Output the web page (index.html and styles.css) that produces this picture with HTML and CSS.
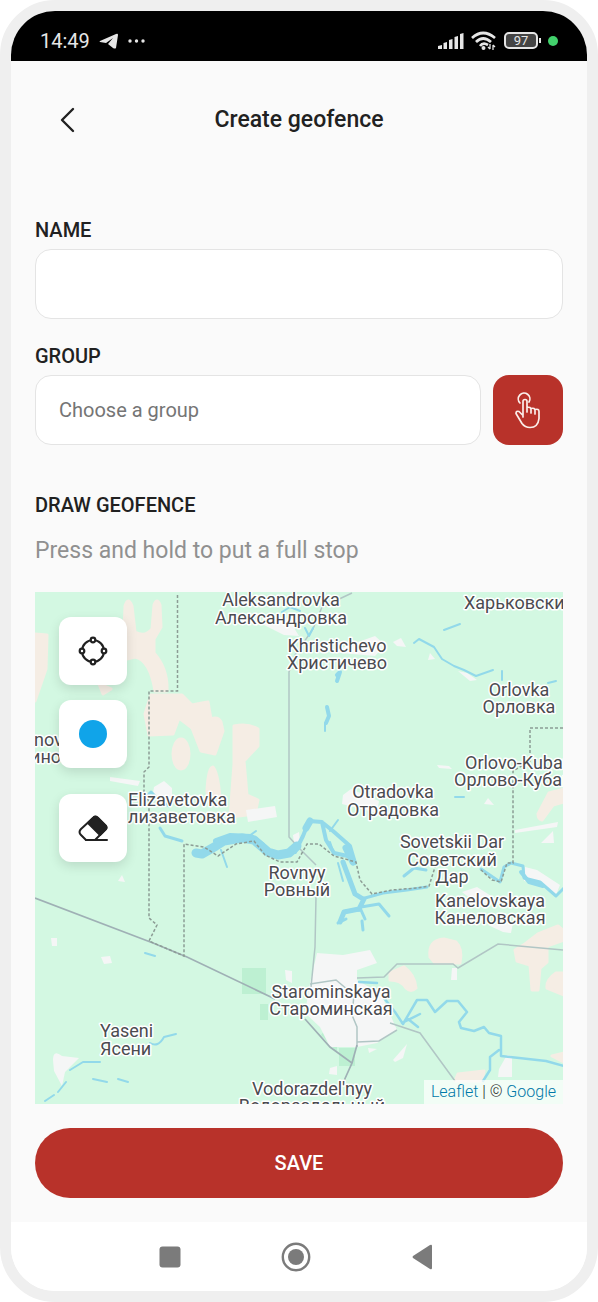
FILE: index.html
```html
<!DOCTYPE html>
<html lang="en">
<head>
    <meta charset="UTF-8">
    <meta name="viewport" content="width=device-width, initial-scale=1.0">
    <title>Create geofence</title>
    <link rel="stylesheet" href="styles.css">
</head>
<body>
    <div class="phone">
        <!-- Status bar -->
        <div class="status-bar">
            <div class="status-group">
                <span class="time">14:49</span>
                <svg width="20" height="18" viewBox="0 0 20 18" fill="#e6e6e6"><path d="M1 9 17 2q2-1 2 1l-2 13q-1 1-3 0l-5-4 5-6-7 5-6-1q-1 0 0-1z"/></svg>
                <svg width="18" height="4" viewBox="0 0 18 4" fill="#e6e6e6"><circle cx="2" cy="2" r="1.7"/><circle cx="8.500" cy="2" r="1.7"/><circle cx="15" cy="2" r="1.7"/></svg>
            </div>
            <div class="status-group status-right">
                <svg width="26" height="18" viewBox="0 0 26 18" fill="#e6e6e6"><path d="M0 17v-3l4-1v4zM5.500 17v-6l3.500-1v7zM11 17V8l3.500-1v10zM16.500 17V5l3.500-1v13zM22 17V2l3.500-1v16z"/></svg>
                <svg width="26" height="20" viewBox="0 0 26 20" fill="none" stroke="#e6e6e6" stroke-width="2.700"><path d="M1 7q11-10 23 0M5 11q7-7 15 0M9 15q3-4 8-1"/><circle cx="12.500" cy="17" r="1" fill="#e6e6e6" stroke-width="2"/><path d="M19 13v5M22 14v5M17 16l2 2M24 16l-2-2" stroke-width="1.300"/></svg>
                <div class="battery">97</div>
                <span class="dot"></span>
            </div>
        </div>

        <main class="app">
            <header class="header">
                <button class="back" type="button" aria-label="Back">
                    <svg width="16" height="26" viewBox="0 0 16 26" fill="none" stroke="#212121" stroke-width="2.400" stroke-linecap="round" stroke-linejoin="round"><path d="M14 2 3 13l11 11"/></svg>
                </button>
                <h1 class="title">Create geofence</h1>
            </header>

            <form class="form">
                <label class="label" for="name">NAME</label>
                <input class="field" id="name" type="text">

                <label class="label label-group" for="group">GROUP</label>
                <div class="group-row">
                    <input class="field" id="group" type="text" placeholder="Choose a group">
                    <button class="pick" type="button" aria-label="Pick a group">
                        <svg width="28" height="38" viewBox="-1 -1 28 38" fill="none" stroke="#fbeeea" stroke-width="1.700" stroke-linecap="round" stroke-linejoin="round"><path d="M5 11a5.800 5.800 0 1 1 9-1"/><path d="M8 25V9.500a2 2 0 0 1 4 0V20M12 15.500q4-1 4 2V21M16 16.500q4-1 4 2V22M20 17.500q4-1 4 2v7q-1 9-9 9-5 0-8-4l-6-10q0-3 3-2l4 4"/></svg>
                    </button>
                </div>

                <h2 class="label label-draw">DRAW GEOFENCE</h2>
                <p class="hint">Press and hold to put a full stop</p>

                <div class="map">
                    <svg class="map-canvas" viewBox="35 592 528 512" preserveAspectRatio="xMidYMid slice">
                        <!-- fields -->
                        <g fill="#f5ede4" stroke="#f5ede4" stroke-width="3" stroke-linejoin="round">
                            <path d="M124 632l1-26q3-10 7 0l3 26q10 6 17-3l2-24q3-8 6 0l1 22-7 12v14q14 16 13 38h-12q-5-31-20-34l-12 3zM35 634l12 1-1 34-11 32zM99 684l12 5-8 5z"/>
                            <path d="M151 695h31l10 10 10-2 6-1 3 17q7-3 10 3l2 9-8 23-14-3-9-23-13-10-6 16-24 1-4-21z"/>
                            <ellipse cx="181" cy="754" rx="8" ry="15"/>
                            <path d="M234 726q14-3 24 3v17l-14 15 3 34 11 5-3 14-25 3 4-53zM207 791q1-24 6-24 5 6 7 31h-12z"/>
                            <path d="M549 793l15-4v13l-11 3-11 15q-4-1-4-6z"/>
                            <path d="M430 957q-2-17 14-18l12 3q7 7 4 21h-25zM390 973l14-6q11 8 12 21-5 5-10 0-5-8-16-8z"/>
                            <path d="M525 944l13-10 20-8 6 5v9l-17 6v16l-7 6-2 22h-6l-2-25-13-4-2-11zM563 973h-7q-10 7-9 15l17 7zM455 1081l3-7 26-3-2 10zM552 1056l12-3v9z"/>
                        </g>

                        <!-- forest -->
                        <g fill="#bdf0d2">
                            <path d="M242 968h24v26h-24zM260 1004h8v16h-8zM339 1048h16v18h-16zM321 1035l7-9 9 14v12z"/>
                        </g>

                        <!-- settlements -->
                        <g fill="#f5f6f6">
                            <path d="M317 953l26 2 27-5 7 13-20 7v10l24 14 16 36-20 13-20 4h-27l-10-20-15-14 5-30zM368 1048l9 1-8 4zM566 1050zM393 1060l14-16-4 14-8 4z"/>
                            <path d="M260 623l28-5 11 18-15-1zM330 652l45-16 10 9-10 11zM343 795l8-6 28 12-2 12-35-9zM246 810l29-4 2 11-29 5zM154 787l10-6 8 7v12h-20zM110 777l30 4-2 5-28-5zM293 835l6-3 1 10-6 2zM393 642l8-4 5 9-9-1zM430 653l5 6-7 1zM458 671l9 2 10 7-7 1zM437 765l12 1 3 3-13-1zM484 804l4-6 6 7zM515 830l43-8-1 5-42 6zM541 843l12-12 1 12z"/>
                            <path d="M462 892l15-5 22 14-20 4zM488 925l25-2-2 10-8-1zM525 867l12 3 23 15-4 10-14-11-18-3zM53 1060q0-11 9-4l17 2-14 14-3 14-8-15zM285 970l7 1v12l-6-3zM101 957l9-1 2 7-8 1zM51 938h6v8h-5zM118 881l4-6 3 7zM452 968h5v12h-6zM499 1069l8-14 5 1v21h-14zM330 1068l7-2v9l-8-1z"/>
                        </g>

                        <!-- roads -->
                        <g fill="none" stroke="#b1c6c5" stroke-width="1.500">
                            <path d="M352 593l-30 14-9 22-18 26-6 17v165l11 12 16 16M316 897l-1 50-4 40M357 978l27-1 13-13h56l5 4 40-24 65 6M390 1023l30 10 35 48M357 1047v-20l-5-12 2-20-18-15-26 4M397 1030l-18 11-22 1"/>
                            <path d="M35 898l118 45 34 14 88 42M305 1019l25 28 22 16-9 20M352 1063l5-18" stroke="#9fb0b5" stroke-width="1.700"/>
                        </g>

                        <!-- rivers -->
                        <g fill="none" stroke="#92d9ea" stroke-linecap="round" stroke-linejoin="round">
                            <path d="M196 853l6 1 14-8 8-5 18-3 12 2 14 12 10 3 11-2 8-7" stroke-width="9"/>
                            <path d="M216 841l14-5 21 1 11 8" stroke-width="6"/>
                            <path d="M221 850l6 17M249 836l7-5" stroke-width="2"/>
                            <path d="M295 852l8-16 6-15 13 1 4 18 8 13 18 4M323 823l10 8 17 15 5 17" stroke-width="4"/>
                            <path d="M346 848l7 14M306 828l4-7" stroke-width="7"/>
                            <path d="M330 831l8-11M330 842l4 12M338 863l5 18" stroke-width="2"/>
                            <path d="M343 862l6 16 6 16 8 5M364 899l-5 10-15 3-4 10" stroke-width="5"/>
                            <path d="M346 911l15-1 4 9M361 907l18-3 10 12M338 923l8-4M362 921l1 9M365 898l18-5 24-3 20-3M404 876l10-8 12 2" stroke-width="3"/>
                            <path d="M160 828l5 8 17 5M143 800l8-8 8 8 10 6M155 815l6 6" stroke-width="3"/>
                            <path d="M481 869l19 13 4-15 7-4 12 3 1 12 16 4 16 14 8-8" stroke-width="3"/>
                            <path d="M521 872l8 10 14 4" stroke-width="4"/>
                            <path d="M359 982l18 1M384 998l11 14 8 12 14-24h10l8 12 12-11h11l9 11-8 10 2 6 13 3 10-4 5 6 12 3v20l45 5 18 5M499 1050l-9 7v13l-7 11M402 1023l18-9M408 1019l10 8" stroke-width="2.500"/>
                            <path d="M337 675l3-3-3 9M327 707l2 9-3 7" stroke-width="4"/>
                            <path d="M145 953l10 3M93 1079l14 3M118 1079l10 3M150 1043q8 5 14-6l12-3M45 1101l9-6M58 1092l8-10M70 1070l13-8h17M444 630l16-6M414 643l5-4 15 8 8 12 12 7 10 4 12 6 17-6M502 671v9M548 683l8-2M455 797h9M282 612l8-5 10 4M305 628l4 8 4-8M325 723v8" stroke-width="2"/>
                        </g>

                        <!-- borders -->
                        <g fill="none" stroke="#8c9c95" stroke-width="1.500" stroke-dasharray="3 2">
                            <path d="M177.500 595v96H149v76l-5 5v20l5 10v116l8 7-8 16 35 15V844l20 3 14 9 18-12 18-3 11 14 15 7h17l10-18 12 0 15 12 22 6 4 18 12 14 20-4 25-2 12-2 7-22M563 728h-33v33l-17 10v92h-6l-6 19-9-2-12-11"/>
                        </g>

                        <g class="place" text-anchor="middle">
                            <text x="281" y="606">Aleksandrovka</text><text x="281" y="624">Александровка</text>
                            <text x="337" y="652">Khristichevo</text><text x="337" y="669">Христичево</text>
                            <text x="519" y="696">Orlovka</text><text x="519" y="713">Орловка</text>
                            <text x="393" y="798">Otradovka</text><text x="393" y="816">Отрадовка</text>
                            <text x="452" y="848">Sovetskii Dar</text><text x="452" y="866">Советский</text><text x="452" y="883">Дар</text>
                            <text x="490" y="907">Kanelovskaya</text><text x="490" y="924">Канеловская</text>
                            <text x="297" y="879">Rovnyy</text><text x="297" y="896">Ровный</text>
                            <text x="331" y="998">Starominskaya</text><text x="331" y="1015">Староминская</text>
                            <text x="312" y="1095">Vodorazdel'nyy</text><text x="312" y="1112">Водораздельный</text>
                        </g>
                        <g class="place">
                            <text x="464" y="609">Харьковски</text>
                            <text x="465" y="769">Orlovo-Kuban</text><text x="454" y="786">Орлово-Кубан</text>
                            <text x="128" y="806">Elizavetovka</text><text x="128" y="823">лизаветовка</text>
                            <text x="100" y="1037">Yaseni</text><text x="100" y="1055">Ясени</text>
                            <text x="34" y="746">nov</text><text x="30" y="763">ино</text>
                        </g>
                    </svg>

                    <div class="tools">
                        <button class="tool" type="button" aria-label="Draw shape">
                            <svg width="30" height="30" viewBox="0 0 30 30" fill="none" stroke="#212121" stroke-width="2.200"><circle cx="15" cy="15" r="11"/><g fill="#fff"><circle cx="15" cy="4" r="2.300"/><circle cx="26" cy="15" r="2.300"/><circle cx="15" cy="26" r="2.300"/><circle cx="4" cy="15" r="2.300"/></g></svg>
                        </button>
                        <button class="tool" type="button" aria-label="Colour">
                            <span class="color"></span>
                        </button>
                        <button class="tool tool-erase" type="button" aria-label="Erase">
                            <svg width="30" height="28" viewBox="0 0 30 28" fill="none" stroke="#212121" stroke-width="2" stroke-linejoin="round" stroke-linecap="round"><path d="M15.500 3.500q2-2 4 0l8 8q2 2 0 4L17 26H8l-5-5q-3-3 0-6z"/><path d="M10 9l6-6q2-1 4 1l8 8q1 2 0 3l-6 6zM8 26h21" fill="#212121"/></svg>
                        </button>
                    </div>
                    <div class="attribution"><a href="#">Leaflet</a> | © <a href="#">Google</a></div>
                </div>

                <button class="save" type="submit">SAVE</button>
            </form>
        </main>

        <!-- System navigation -->
        <nav class="nav-bar">
            <button type="button" aria-label="Recent apps"><svg width="22" height="22" viewBox="0 0 22 22" fill="#7b7b7b"><rect x="0.500" y="0.500" width="21" height="21" rx="3"/></svg></button>
            <button type="button" aria-label="Home"><svg width="30" height="30" viewBox="0 0 30 30" fill="#7b7b7b"><circle cx="15" cy="15" r="13.200" fill="none" stroke="#7b7b7b" stroke-width="2.400"/><circle cx="15" cy="15" r="8"/></svg></button>
            <button type="button" aria-label="Back"><svg width="20" height="26" viewBox="0 0 20 26" fill="#7b7b7b"><path d="M1 12 18 1q2-1 2 1v22q0 2-2 1L1 14q-1-1 0-2z"/></svg></button>
        </nav>
    </div>
</body>
</html>
```
FILE: styles.css
```css
* {
    box-sizing: border-box;
}

body {
    margin: 0;
    background-color: #fff;
    font-family: Roboto, Arial, sans-serif;
    color: #212121;
}

button {
    display: flex;
    justify-content: center;
    align-items: center;
    padding: 0;
    border: none;
    background: none;
    font-family: inherit;
    cursor: pointer;
}

.phone {
    border: 11px solid #efefef;
    border-radius: 55px;
    overflow: hidden;
    background-color: #fff;
}

/* Status bar */
.status-bar {
    display: flex;
    justify-content: space-between;
    align-items: center;
    height: 50px;
    padding: 9px 29px 0;
    background-color: #000;
    color: #e6e6e6;
}

.status-group {
    display: flex;
    align-items: center;
    gap: 9px;
}

.status-right {
    gap: 7px;
}

.time {
    font-size: 20px;
    font-weight: 400;
}

.battery {
    position: relative;
    width: 34px;
    height: 17px;
    margin-right: 3px;
    border: 2px solid #e6e6e6;
    border-radius: 5px;
    background-color: #444;
    font-size: 13px;
    line-height: 13px;
    text-align: center;
}

.battery::after {
    content: "";
    position: absolute;
    top: 4px;
    right: -5px;
    width: 2px;
    height: 5px;
    background-color: #e6e6e6;
}

.dot {
    width: 10px;
    height: 10px;
    border-radius: 50%;
    background-color: #42d16c;
}

/* App */
.app {
    padding: 0 24px 24px;
    background-color: #fafafa;
}

.header {
    display: grid;
    grid-template-columns: 64px 1fr 64px;
    align-items: center;
    height: 117px;
}

.back {
    height: 64px;
}

.title {
    margin: 0;
    font-size: 23px;
    font-weight: 500;
    text-align: center;
}

.form {
    padding-top: 40px;
}

.label {
    display: block;
    margin: 0 0 7px;
    font-size: 20px;
    font-weight: 500;
    line-height: 24px;
}

.label-group {
    margin-top: 25px;
}

.label-draw {
    margin: 48px 0 18px;
}

.field {
    display: block;
    width: 100%;
    height: 70px;
    padding: 0 23px;
    border: 1px solid #e4e4e4;
    border-radius: 16px;
    background-color: #fff;
    font-family: inherit;
    font-size: 20px;
    color: #212121;
}

.field::placeholder {
    color: #757575;
}

.group-row {
    display: flex;
    gap: 12px;
}

.pick {
    flex: 0 0 70px;
    height: 70px;
    border-radius: 16px;
    background-color: #b8322a;
}

.hint {
    margin: 0 0 25px;
    font-size: 23px;
    line-height: 32px;
    color: #909090;
}

/* Map */
.map {
    position: relative;
    height: 512px;
    overflow: hidden;
    background-color: #d3f8e2;
}

.map-canvas {
    display: block;
    width: 100%;
    height: 100%;
}

.place {
    font-size: 18px;
    fill: #4b4b50;
    stroke: #fff;
    stroke-width: 3px;
    stroke-linejoin: round;
    paint-order: stroke;
}

.tools {
    position: absolute;
    top: 25px;
    left: 24px;
    display: grid;
    gap: 15px;
}

.tool {
    width: 68px;
    height: 68px;
    border-radius: 12px;
    background-color: #fff;
    box-shadow: 0 4px 12px rgba(0, 0, 0, 0.12);
}

.tool-erase {
    margin-top: 11px;
}

.color {
    width: 28px;
    height: 28px;
    border-radius: 50%;
    background-color: #10a4e9;
}

.attribution {
    position: absolute;
    right: 0;
    bottom: 0;
    padding: 0 7px;
    background-color: rgba(255, 255, 255, 0.7);
    font-size: 16px;
    font-weight: 300;
    line-height: 24px;
}

.attribution a {
    color: #0078a8;
    text-decoration: none;
}

.save {
    width: 100%;
    height: 70px;
    margin-top: 24px;
    border-radius: 35px;
    background-color: #b8322a;
    color: #fff;
    font-size: 20px;
    font-weight: 500;
}

/* System navigation */
.nav-bar {
    display: flex;
    justify-content: center;
    height: 69px;
    padding-right: 6px;
    background-color: #fff;
}

.nav-bar button {
    width: 126px;
}
```
